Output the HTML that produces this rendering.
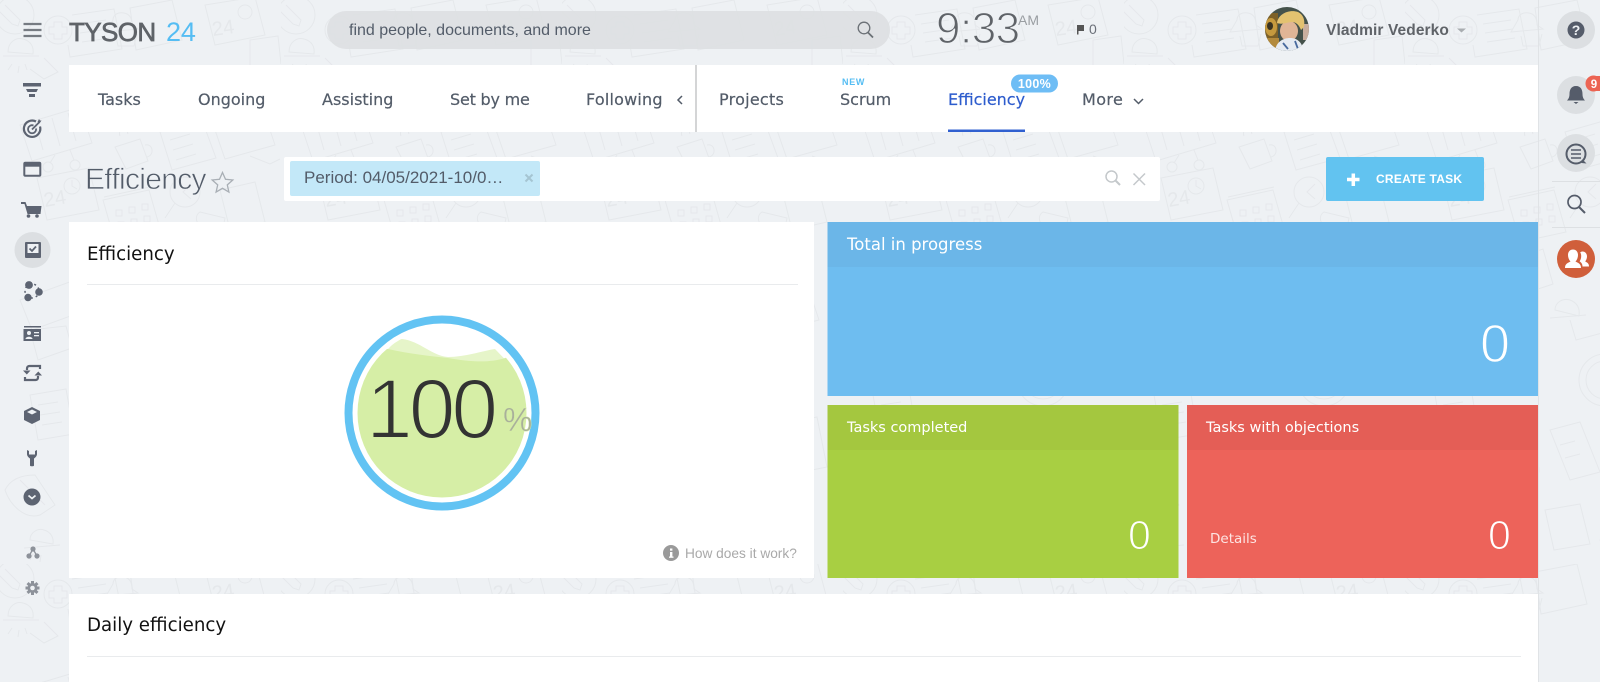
<!DOCTYPE html>
<html><head><meta charset="utf-8"><style>
html,body{margin:0;padding:0;width:1600px;height:682px;overflow:hidden;background:#eef1f4}
body{position:relative;font-family:"Liberation Sans",sans-serif}
.t{position:absolute;white-space:nowrap}
.d{font-family:"DejaVu Sans",sans-serif}
.tab{font-family:"DejaVu Sans",sans-serif;font-size:16px;color:#535c69;-webkit-text-stroke:.2px #535c69;top:90px;line-height:20px}
svg{position:absolute;left:0;top:0;overflow:visible}
</style></head><body>
<svg width="1600" height="682" viewBox="0 0 1600 682">
<defs>
<g id="tile" fill="none" stroke="#e5e8eb" stroke-width="1">
  <circle cx="58" cy="30" r="14"/><path d="M54 22h8v5h5v7h-5v5h-8v-5h-5v-7h5z"/>
  <path d="M72 15l42 -6 8 40 -52 8 -2-12M78 24l28-4M80 33l28-4M82 42l28-4"/>
  <path d="M130 8l42-8 10 40-46 10z"/><path d="M205 5l50-8 10 38-50 10z"/>
  <text x="213" y="36" font-family="Liberation Sans" font-size="20" fill="#e5e8eb" stroke="none" transform="rotate(-8 213 36)">24</text>
  <circle cx="245" cy="12" r="7"/>
  <circle cx="15" cy="15" r="19"/><path d="M5 5l15 15-2 6-6-2-15-15"/>
  <path d="M8 52c0-10 8-15 15-13 8 2 11 8 10 15zM3 56l36 0M8 70l4-6M18 73l1-7M27 70l-2-6M44 58l14 14-14 7-14-10"/>
  <path d="M113 20c0-6 6-8 11-7 6 1 8 6 8 12l6 4-32 3zM116 36l2 10 16 0 3-12"/>
  <path d="M75 70l35-1 5 30-15 1-8 10-4-10-13 1zM85 85h2M92 85h2M99 85h2"/>
  <path d="M250 65l0-25 28-4 3 28M240 80l40-3"/>
  <path d="M20 125l60-18 12 36-60 18zM35 122l8 28M52 118l8 28M68 113l8 28"/>
  <circle cx="48" cy="167" r="5"/><circle cx="75" cy="165" r="5"/><path d="M55 155l-5 8M70 150l4 10"/>
  <path d="M115 147l25-8 8 22-22 8zM145 145c8-2 10 10 2 12M120 136c-2-4 2-6 0-10M128 134c-2-4 2-6 0-10"/>
  <path d="M160 132l42-12 14 38-44 12zM170 140l20-6M173 150l20-6M176 160l20-6"/>
  <path d="M215 130l50-15 10 30-50 14zM250 156l20 8 10-5"/>
  <path d="M37 178l52-10 10 42-52 10z"/>
  <text x="45" y="207" font-family="Liberation Sans" font-size="20" fill="#e5e8eb" stroke="none" transform="rotate(-10 45 207)">24</text>
  <circle cx="72" cy="186" r="8"/><path d="M72 180v6l5 3"/>
  <path d="M103 200l46-10 12 42-46 10zM104 197l46-10M116 210h6v6h-6zM129 207h6v6h-6zM142 204h6v6h-6zM118 222h6v6h-6zM131 219h6v6h-6zM144 216h6v6h-6z"/>
  <circle cx="185" cy="192" r="15"/><path d="M175 203l-10 15M191 184l-8 8 8 7"/>
  <path d="M220 190l35-8 10 40-35 8zM200 212l25 6-2 10-22-3c-6-2-6-10-1-13z"/>
  <path d="M20 300l55-20 12 30-55 20zM30 330l8 30 34-12-6-22zM90 265l48-16 10 35-48 16z"/>
  <path d="M150 310c0-8 8-12 15-10 8 3 10 9 9 16zM145 318l36-3M165 320l6 20 30-8"/>
  <circle cx="200" cy="380" r="26"/><circle cx="200" cy="380" r="19"/><path d="M200 368v12l8 6"/>
  <path d="M215 290l30-6 12 36-16 4-16 14-2-12-16 3zM222 305h2M230 303h2M238 301h2"/>
  <path d="M30 395l36-6 8 45-36 6zM38 405l20-3M40 415l20-3M42 425l20-3"/>
  <circle cx="100" cy="432" r="22"/><path d="M100 420v12l9 4"/><circle cx="122" cy="470" r="12"/><path d="M122 462v8l6 2M119 482l-2 16"/>
  <path d="M145 430l30-8 20 50-30 8zM155 445l15-4M160 458l15-4"/>
  <path d="M215 425l40-8 10 50-40 8zM225 438l20-4M228 450l20-4"/>
  <path d="M5 490c5 15 20 30 35 25l15-10-20-30c-15 0-25 5-30 15zM20 480l25 25"/>
  <path d="M30 540c0-8 8-12 14-10 7 2 10 8 9 14zM24 548l36-3M30 560l3-6M40 562l1-7"/>
  <path d="M140 510l35-6 10 40-36 6zM195 540l40-8 8 24-40 8z"/>
</g>
<pattern id="bg" width="281" height="564" patternUnits="userSpaceOnUse"><use href="#tile"/></pattern>
<clipPath id="cc"><circle cx="442" cy="413" r="84.5"/></clipPath>
<clipPath id="av"><circle cx="1287" cy="29" r="22"/></clipPath>
</defs>
<rect width="1600" height="682" fill="#eef1f4"/>
<rect width="1600" height="682" fill="url(#bg)"/>
<!-- search bar -->
<rect x="327" y="11" width="563" height="38" rx="19" fill="#dde0e2" fill-opacity=".92"/>
<!-- panels -->
<rect x="69" y="65" width="1469" height="67" fill="#fff"/>
<rect x="695" y="65" width="2" height="67" fill="#d4d5d6"/>
<rect x="948" y="129.500" width="77" height="2.500" fill="#3060d0"/>
<rect x="284" y="157" width="876" height="44" rx="2" fill="#fff"/>
<rect x="290" y="161" width="250" height="35" rx="2" fill="#c3e8f8"/>
<rect x="1326" y="157" width="158" height="44" rx="2" fill="#62c3f0"/>
<rect x="69" y="222" width="745" height="356" fill="#fff"/>
<rect x="87" y="284" width="711" height="1" fill="#e9ebed"/>
<rect x="69" y="594" width="1469" height="88" fill="#fff"/>
<rect x="87" y="656" width="1434" height="1" fill="#e9ebed"/>
<rect x="827.500" y="222" width="710.500" height="174" fill="#6ebdf0"/>
<rect x="827.500" y="222" width="710.500" height="45" fill="#6bb6e8"/>
<rect x="827.500" y="405" width="351" height="173" fill="#a8cf42"/>
<rect x="827.500" y="405" width="351" height="45" fill="#a4c73f"/>
<rect x="1187" y="405" width="351" height="173" fill="#ed635a"/>
<rect x="1187" y="405" width="351" height="45" fill="#e45e56"/>
<rect x="1538" y="0" width="1" height="682" fill="#e0e3e6"/>
<!-- gauge -->
<circle cx="442" cy="413" r="93.500" fill="none" stroke="#62c3f3" stroke-width="8"/>
<g clip-path="url(#cc)">
<path d="M388 349C393 344 397 339 402 339C420 341 432 356 448 357C465 357 482 351 495 349L520 375L380 375Z" fill="#e6f5c9"/>
<path d="M340 340L388 349C410 354 430 356 448 358C470 362 490 363 505 358L545 345L545 510L340 510Z" fill="#d6eea6"/>
</g>
<!-- hamburger -->
<path d="M23.500 24h18M23.500 30h18M23.500 36h18" stroke="#767b82" stroke-width="2.200"/>
<!-- funnel -->
<g fill="#5d6472">
<rect x="23" y="83" width="18" height="3.500"/><path d="M26 89h12l-1.500 3h-9z"/><rect x="29" y="94" width="6" height="3"/>
</g>
<!-- target -->
<g fill="none" stroke="#5d6472"><path d="M36 121.500a8.200 8.200 0 1 0 4 5" stroke-width="2.200"/><path d="M33.500 125.500a4 4 0 1 0 2.500 3" stroke-width="1.800"/><path d="M32 129.500l7-7" stroke-width="1.800"/></g>
<path d="M37.500 122l1.500-3 1 1.500 1.500 0-2 3z" fill="#5d6472"/>
<!-- window -->
<rect x="24.300" y="162.700" width="16" height="13" rx="1" fill="none" stroke="#5d6472" stroke-width="2"/>
<rect x="24.300" y="162.700" width="16" height="4" fill="#5d6472"/>
<!-- cart -->
<path d="M21 202h4.500l1.500 4h14.500l-1 8H27.500L24.500 204H21z" fill="#5d6472"/><circle cx="28.500" cy="216" r="1.800" fill="#5d6472"/><circle cx="37" cy="216" r="1.800" fill="#5d6472"/>
<!-- task -->
<circle cx="32.500" cy="250" r="18" fill="#dcdfe2"/>
<rect x="25" y="242" width="16" height="16" rx="1" fill="#5d6472"/><rect x="27.500" y="244" width="11" height="9" fill="#eef1f4"/>
<path d="M29.500 248.500l2.500 2.500 4-4.500" fill="none" stroke="#5d6472" stroke-width="1.800"/>
<!-- circles -->
<circle cx="32" cy="291" r="7" fill="none" stroke="#5d6472" stroke-width="1.500" stroke-dasharray="2 3"/>
<g fill="#5d6472"><circle cx="29" cy="285" r="3.900"/><circle cx="39" cy="292" r="3.800"/><circle cx="28" cy="297.500" r="3.700"/></g>
<!-- id card -->
<rect x="24" y="326" width="17" height="1.500" fill="#5d6472"/>
<rect x="23.500" y="329" width="17.500" height="12" fill="#5d6472"/><circle cx="29" cy="333" r="2" fill="#eef1f4"/><path d="M25.500 339c0-3 7-3 7 0z" fill="#eef1f4"/><rect x="34" y="332" width="5" height="1.300" fill="#eef1f4"/><rect x="34" y="335" width="5" height="1.300" fill="#eef1f4"/>
<!-- refresh -->
<g fill="none" stroke="#5d6472" stroke-width="2.200"><path d="M27 370v-1.500c0-1.500 1-2.500 2.500-2.500H40v3"/><path d="M38 376v1.500c0 1.500-1 2.500-2.500 2.500H25v-3"/></g>
<path d="M23 370.500h7.500l-3.700 4zM34.500 375.500h7.500l-3.700-4z" fill="#5d6472"/>
<!-- cube -->
<path d="M32 407l8 4v9l-8 4-8-4v-9z" fill="#5d6472"/><path d="M32 409.500l5 2.500-5 2.500-5-2.500z" fill="#eef1f4"/>
<!-- wrench -->
<path d="M27 450v4c0 2 1.500 3.500 3 4.500v7c0 1 4 1 4 0v-7c1.500-1 3-2.500 3-4.500v-4l-2 1v3.500h-6V451z" fill="#5d6472"/>
<!-- chevron circle -->
<circle cx="32" cy="497" r="8.500" fill="#5d6472"/><path d="M28.500 495.500l3.500 3 3.500-3" fill="none" stroke="#eef1f4" stroke-width="1.800"/>
<!-- nodes -->
<g fill="#8d929a"><circle cx="33" cy="549" r="2.600"/><circle cx="29" cy="556" r="2.600"/><circle cx="37" cy="556" r="2.600"/></g><path d="M33 549l-4 7M33 549l4 7" stroke="#8d929a" stroke-width="1.300"/>
<!-- gear -->
<g fill="#8d929a"><circle cx="32.500" cy="588" r="5"/><path d="M31 581h3v14h-3zM25.500 586.500h14v3h-14z"/><path d="M31 581h3v14h-3z" transform="rotate(45 32.500 588)"/><path d="M31 581h3v14h-3z" transform="rotate(-45 32.500 588)"/></g><circle cx="32.500" cy="588" r="2.300" fill="#eef1f4"/>
<!-- header search icon -->
<circle cx="864" cy="28" r="5.800" fill="none" stroke="#6b7076" stroke-width="1.300"/><path d="M868 32.500l5 5" stroke="#6b7076" stroke-width="1.800"/>
<!-- flag -->
<path d="M1077 25h7v6h-5.500v3.500H1077z" fill="#555"/>
<!-- avatar -->
<g clip-path="url(#av)">
<rect x="1265" y="7" width="44" height="44" fill="#45524b"/>
<rect x="1265" y="13" width="13" height="38" fill="#7d6128"/>
<ellipse cx="1271" cy="27" rx="6" ry="9" fill="#c69a3e"/><ellipse cx="1270" cy="26" rx="3" ry="4" fill="#3a3320"/>
<rect x="1265" y="38" width="14" height="13" fill="#b38a3c"/>
<rect x="1303" y="24" width="6" height="16" fill="#c8ae9e"/>
<ellipse cx="1289" cy="31" rx="9" ry="10" fill="#e0b596"/>
<path d="M1277 23c1-9 12-14 21-11 6 3 7 9 6 15l-3 3c-2-5-5-8-9-8-4 0-10 3-15 1z" fill="#e3c270"/>
<path d="M1275 51c1-9 8-13 15-13 8 0 12 5 14 13z" fill="#e6ebf2"/>
<path d="M1283 43l5 6M1295 41l3 8" stroke="#496a9e" stroke-width="1.800"/>
</g>
<path d="M1457 28.500h9l-4.500 4z" fill="#a9adb1"/>
<!-- tab chevrons -->
<path d="M682 96l-4 4 4 4" fill="none" stroke="#535c69" stroke-width="1.500"/>
<path d="M1134 99l4.500 4.500 4.500-4.500" fill="none" stroke="#535c69" stroke-width="1.500"/>
<!-- badge -->
<rect x="1011" y="74.500" width="47" height="18" rx="9" fill="#6ebdf5"/>
<!-- star -->
<path d="M222.500 172.500l3 6.800 7.300.7-5.500 4.900 1.600 7.200-6.400-3.800-6.400 3.800 1.600-7.200-5.500-4.900 7.300-.7z" fill="none" stroke="#a9afb5" stroke-width="1.300"/>
<!-- tag x -->
<path d="M525.500 174.500l7 7M532.500 174.500l-7 7" stroke="#a5c5d2" stroke-width="2"/>
<!-- filter icons -->
<circle cx="1111.500" cy="176.500" r="5.500" fill="none" stroke="#c4c8cb" stroke-width="1.500"/><path d="M1115.500 180.500l4.500 4.500" stroke="#c4c8cb" stroke-width="2"/>
<path d="M1133.500 173.500l11.500 11.500M1145 173.500l-11.500 11.500" stroke="#c4c8cb" stroke-width="1.500"/>
<!-- plus -->
<path d="M1347 179.500h12.500M1353.300 173.500v12.500" stroke="#fff" stroke-width="3.500"/>
<!-- info -->
<circle cx="671" cy="553" r="8" fill="#9a9a9a"/><rect x="670" y="552" width="2.400" height="5.500" fill="#fff"/><rect x="670" y="548.500" width="2.400" height="2.200" fill="#fff"/><rect x="669" y="556.500" width="4.500" height="1.300" fill="#fff"/>
<!-- right rail -->
<circle cx="1576" cy="30" r="19" fill="#dcdfe2"/><circle cx="1576" cy="30" r="8.500" fill="#555c6a"/>
<text x="1576" y="35" font-family="Liberation Sans" font-weight="700" font-size="14" fill="#eef1f4" text-anchor="middle">?</text>
<circle cx="1576" cy="95" r="19" fill="#dcdfe2"/>
<path d="M1576 86c-5 0-6.500 4-6.500 8 0 3-1 5-2.500 6.500h18c-1.500-1.500-2.500-3.500-2.500-6.500 0-4-1.500-8-6.500-8z" fill="#555c6a"/><path d="M1573.500 102h5l-2.500 2z" fill="#555c6a"/>
<circle cx="1593.500" cy="83.500" r="8" fill="#ec6453"/><rect x="1593" y="76" width="7" height="15" fill="#ec6453"/>
<text x="1594" y="88" font-family="Liberation Sans" font-weight="700" font-size="11.500" fill="#fff" text-anchor="middle">9</text>
<circle cx="1576" cy="153" r="19" fill="#dcdfe2"/>
<circle cx="1576" cy="154" r="9.500" fill="none" stroke="#555c6a" stroke-width="2"/><path d="M1571 150h10M1571 154h10M1571 158h10" stroke="#555c6a" stroke-width="1.500"/><path d="M1583 160l3.500 3.500-5-.5z" fill="#555c6a"/>
<rect x="1552" y="181" width="48" height="1" fill="#dde0e3"/>
<circle cx="1574.500" cy="202" r="6.500" fill="none" stroke="#555c6a" stroke-width="1.700"/><path d="M1579 207l6 6" stroke="#555c6a" stroke-width="2"/>
<rect x="1552" y="227" width="48" height="1" fill="#dde0e3"/>
<circle cx="1576" cy="259" r="19" fill="#d05f3b"/>
<path d="M1565 268c0-4.500 3-5 5.500-6.500-1.500-1.500-2.500-4-2.500-6.500 0-3.200 2-5.500 5-5.500s5 2.300 5 5.500c0 2.500-1 5-2.500 6.500 2.500 1.500 5.500 2 5.500 6.500z" fill="#fff"/>
<path d="M1582.500 266.500h6.500c0-3.500-2-3.800-3.800-5 1-1.500 1.800-3 1.800-5 0-2.800-1.800-5-4.300-5-1 0-1.800.3-2.500.8.700 1.200 1 2.400 1 3.700 0 2-.5 3.800-1.600 5.400 1.600 1 2.900 2.500 2.900 5.100z" fill="#fff"/>
</svg>

<div class="t" style="left:69px;top:15px;line-height:34px;font-size:26px;color:#5f6368;-webkit-text-stroke:.7px #5f6368;letter-spacing:-.6px">TYSON</div>
<div class="t" style="left:166px;top:15px;line-height:34px;font-size:27px;color:#55bdf3;letter-spacing:-.2px">24</div>
<div class="t" style="left:349px;top:21px;line-height:20px;font-size:16px;color:#535c69">find people, documents, and more</div>
<div class="t" style="left:936px;top:4px;line-height:50px;font-size:44px;color:#5f6368;-webkit-text-stroke:1.200px #eef1f4;letter-spacing:-.5px">9:33</div>
<div class="t" style="left:1018px;top:12px;line-height:16px;font-size:14px;color:#9a9ea2">AM</div>
<div class="t" style="left:1089px;top:21px;line-height:16px;font-size:14px;color:#6b7079">0</div>
<div class="t" style="left:1326px;top:22px;line-height:18px;font-size:15.500px;font-weight:700;color:#5f6368;letter-spacing:.1px">Vladmir Vederko</div>

<div class="t tab" style="left:98px">Tasks</div>
<div class="t tab" style="left:198px">Ongoing</div>
<div class="t tab" style="left:322px">Assisting</div>
<div class="t tab" style="left:450px;letter-spacing:-.2px">Set by me</div>
<div class="t tab" style="left:586px;letter-spacing:.2px">Following</div>
<div class="t tab" style="left:719px;letter-spacing:.25px">Projects</div>
<div class="t tab" style="left:840px">Scrum</div>
<div class="t tab" style="left:948px;color:#2d5ccd;-webkit-text-stroke:.2px #2d5ccd">Efficiency</div>
<div class="t tab" style="left:1082px;letter-spacing:.4px">More</div>
<div class="t" style="left:842px;top:76px;line-height:12px;font-size:9px;font-weight:700;letter-spacing:.7px;color:#55bdf3">NEW</div>
<div class="t" style="left:1011px;top:74.500px;width:47px;text-align:center;line-height:18px;font-size:12.500px;font-weight:700;letter-spacing:.3px;color:#fff">100%</div>

<div class="t" style="left:85px;top:160px;line-height:40px;font-size:30px;color:#535c69;-webkit-text-stroke:.7px #eef1f4;letter-spacing:-.7px">Efficiency</div>
<div class="t" style="left:304px;top:168px;line-height:20px;font-size:17px;color:#535c69">Period: 04/05/2021-10/0…</div>
<div class="t" style="left:1376px;top:171px;line-height:16px;font-size:12px;font-weight:700;color:#fff;letter-spacing:.25px">CREATE TASK</div>

<div class="t d" style="left:87px;top:242.500px;line-height:24px;font-size:18.200px;color:#111">Efficiency</div>
<div class="t d" style="left:87px;top:614px;line-height:24px;font-size:18.200px;color:#111">Daily efficiency</div>
<div class="t" style="left:685px;top:546px;line-height:16px;font-size:13.700px;color:#a9a9a9">How does it work?</div>

<div class="t" style="left:366px;top:361px;line-height:96px;font-size:84px;letter-spacing:-4px;color:#333;-webkit-text-stroke:2.100px #d6eea6">100</div>
<div class="t" style="left:503px;top:400px;line-height:40px;font-size:33px;color:#a9b09b;-webkit-text-stroke:.4px #d6eea6">%</div>

<div class="t d" style="left:847px;top:235px;line-height:20px;font-size:16.500px;color:#fff">Total in progress</div>
<div class="t d" style="left:847px;top:418px;line-height:20px;font-size:14.500px;color:#fff">Tasks completed</div>
<div class="t d" style="left:1206px;top:418px;line-height:20px;font-size:14.500px;color:#fff">Tasks with objections</div>
<div class="t d" style="left:1210px;top:529px;line-height:20px;font-size:13.500px;color:#fde4e2">Details</div>

<div class="t" style="left:1480px;top:314px;line-height:60px;font-size:54px;color:#fff;-webkit-text-stroke:1.400px #6ebdf0">0</div>
<div class="t" style="left:1128px;top:512px;line-height:46px;font-size:41px;color:#fff;-webkit-text-stroke:1.100px #a8cf42">0</div>
<div class="t" style="left:1488px;top:512px;line-height:46px;font-size:41px;color:#fff;-webkit-text-stroke:1.100px #ed635a">0</div>
</body></html>
